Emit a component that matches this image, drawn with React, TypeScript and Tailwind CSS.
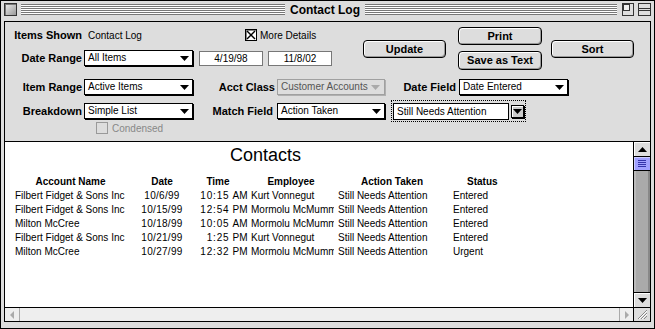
import React from 'react';

const rows = [
  ['Filbert Fidget & Sons Inc', '10/6/99', '10:15', 'AM', 'Kurt Vonnegut', 'Still Needs Attention', 'Entered'],
  ['Filbert Fidget & Sons Inc', '10/15/99', '12:54', 'PM', 'Mormolu McMummy', 'Still Needs Attention', 'Entered'],
  ['Milton McCree', '10/18/99', '10:05', 'AM', 'Mormolu McMummy', 'Still Needs Attention', 'Entered'],
  ['Filbert Fidget & Sons Inc', '10/21/99', '1:25', 'PM', 'Kurt Vonnegut', 'Still Needs Attention', 'Entered'],
  ['Milton McCree', '10/27/99', '12:32', 'PM', 'Mormolu McMummy', 'Still Needs Attention', 'Urgent'],
];

function Arrow({ color = '#000' }: { color?: string }) {
  return (
    <svg width="9" height="5" viewBox="0 0 9 5" className="shrink-0">
      <polygon points="0,0 9,0 4.5,5" fill={color} />
    </svg>
  );
}

function Popup({ text, width, disabled }: { text: string; width: string; disabled?: boolean }) {
  return (
    <div
      className={
        disabled
          ? `${width} h-[16px] flex items-center pl-[3px] pr-[4px] border border-[#a0a0a0] bg-[#dddddd] text-[#555] shadow-[1px_1px_0_#b0b0b0]`
          : `${width} h-[16px] flex items-center pl-[3px] pr-[3px] border border-black bg-white shadow-[1px_1px_0_#000]`
      }
    >
      <span className="text-[10px] leading-[14px] whitespace-nowrap">{text}</span>
      <span className="ml-auto">
        <Arrow color={disabled ? '#aaa' : '#000'} />
      </span>
    </div>
  );
}

function Button({ label, cls }: { label: string; cls: string }) {
  return (
    <div
      className={`${cls} flex items-center justify-center rounded-[4px] border border-black bg-[#dddddd] shadow-[inset_1px_1px_0_#fff,inset_-1px_-1px_0_#999] text-[11px] font-bold whitespace-nowrap`}
    >
      {label}
    </div>
  );
}

const stripes =
  'h-[11px] bg-[image:repeating-linear-gradient(to_bottom,#777_0px,#777_1px,#fff_1px,#fff_2px)]';

export default function App() {
  return (
    <div className="w-[655px] h-[329px] border border-black bg-[#dddddd] font-['Liberation_Sans',Arial,sans-serif] text-black overflow-hidden">
      {/* title bar */}
      <div className="flex h-[20px] items-start pt-[2px] pl-[3px] pr-[3px]">
        <div className="w-[13px] h-[13px] border border-[#333] bg-[linear-gradient(135deg,#eee,#999)] shadow-[inset_1px_1px_0_#777]" />
        <div className={`ml-[4px] mt-[1px] w-[264px] ${stripes}`} />
        <div className="px-[5px] text-[12px] font-bold leading-[14px] whitespace-nowrap">Contact Log</div>
        <div className={`flex-1 mt-[1px] ${stripes}`} />
        <svg width="12" height="13" viewBox="0 0 12 13" className="ml-[5px]">
          <rect x="0.5" y="0.5" width="11" height="12" fill="#ddd" stroke="#333" />
          <rect x="1.5" y="1.5" width="6" height="6" fill="#eee" stroke="#333" />
        </svg>
        <svg width="13" height="13" viewBox="0 0 13 13" className="ml-[4px]">
          <rect x="0.5" y="0.5" width="12" height="12" fill="#ddd" stroke="#333" />
          <line x1="1" y1="5.5" x2="12" y2="5.5" stroke="#333" />
          <line x1="1" y1="7.5" x2="12" y2="7.5" stroke="#333" />
        </svg>
      </div>

      {/* body */}
      <div className="ml-[3px] mr-[3px] h-[301px] border border-black flex flex-col">
        {/* controls */}
        <div className="h-[120px] border-b border-black shrink-0 whitespace-nowrap">
          <div className="flex h-[48px]">
            <div className="w-[335px] shrink-0">
              <div className="flex items-center mt-[6px] h-[14px]">
                <div className="w-[77px] shrink-0 text-right text-[11px] font-bold">Items Shown</div>
                <div className="ml-[6px] w-[60px] shrink-0 text-[10px]">Contact Log</div>
                <div className="ml-[97px] shrink-0 w-[12px] h-[12px] border border-black bg-white shadow-[inset_1px_1px_0_#888]">
                  <svg width="10" height="10" viewBox="0 0 10 10">
                    <line x1="1" y1="1" x2="9" y2="9" stroke="#000" strokeWidth="1.5" />
                    <line x1="9" y1="1" x2="1" y2="9" stroke="#000" strokeWidth="1.5" />
                  </svg>
                </div>
                <div className="ml-[3px] text-[10px]">More Details</div>
              </div>
              <div className="flex items-center mt-[8px] h-[16px]">
                <div className="w-[77px] shrink-0 text-right text-[11px] font-bold">Date Range</div>
                <div className="ml-[2px]">
                  <Popup text="All Items" width="w-[109px]" />
                </div>
                <div className="ml-[6px] w-[64px] h-[15px] border border-[#777] bg-white text-[10px] leading-[13px] text-center">4/19/98</div>
                <div className="ml-[5px] w-[64px] h-[15px] border border-[#777] bg-white text-[10px] leading-[13px] text-center">11/8/02</div>
              </div>
            </div>
            <Button label="Update" cls="ml-[23px] mt-[18px] w-[83px] h-[18px]" />
            <div className="ml-[12px] flex flex-col">
              <Button label="Print" cls="mt-[5px] w-[84px] h-[18px]" />
              <Button label="Save as Text" cls="mt-[6px] w-[84px] h-[19px]" />
            </div>
            <Button label="Sort" cls="ml-[9px] mt-[18px] w-[83px] h-[18px]" />
          </div>

          <div className="flex items-center mt-[9px] h-[16px]">
            <div className="w-[77px] text-right text-[11px] font-bold">Item Range</div>
            <div className="ml-[2px]">
              <Popup text="Active Items" width="w-[109px]" />
            </div>
            <div className="w-[82px] text-right text-[11px] font-bold">Acct Class</div>
            <div className="ml-[2px]">
              <Popup text="Customer Accounts" width="w-[108px]" disabled />
            </div>
            <div className="w-[71px] text-right text-[11px] font-bold">Date Field</div>
            <div className="ml-[3px]">
              <Popup text="Date Entered" width="w-[109px]" />
            </div>
          </div>

          <div className="flex items-center mt-[8px] h-[16px]">
            <div className="w-[77px] text-right text-[11px] font-bold">Breakdown</div>
            <div className="ml-[2px]">
              <Popup text="Simple List" width="w-[109px]" />
            </div>
            <div className="w-[82px] text-right text-[11px] font-bold pr-[2px]">Match Field</div>
            <div className="ml-[2px]">
              <Popup text="Action Taken" width="w-[108px]" />
            </div>
            <div className="ml-[6px] w-[135px] h-[22px] border border-dotted border-black flex items-center pl-[1px]">
              <div className="w-[116px] h-[17px] border border-black bg-white text-[10px] leading-[15px] pl-[3px]">Still Needs Attention</div>
              <div className="ml-[2px] w-[13px] h-[13px] border border-black bg-[#ccc] shadow-[1px_1px_0_#000,inset_1px_1px_0_#fff] flex items-center justify-center">
                <Arrow />
              </div>
            </div>
          </div>

          <div className="flex items-center mt-[3px] h-[12px] ml-[91px]">
            <div className="w-[12px] h-[12px] border border-[#999]" />
            <div className="ml-[4px] text-[10px] text-[#888]">Condensed</div>
          </div>
        </div>

        {/* list */}
        <div className="flex flex-1 min-h-0">
          <div className="flex-1 bg-white">
            <div className="mt-[3px] pl-[225px] text-[18px] leading-[20px]">Contacts</div>
            <div className="mt-[10px] grid grid-cols-[131px_52px_60px_86px_112px_70px] text-[10px] leading-[14px] whitespace-nowrap">
              <div className="text-center font-bold">Account Name</div>
              <div className="text-center font-bold">Date</div>
              <div className="text-center font-bold">Time</div>
              <div className="text-center font-bold">Employee</div>
              <div className="text-center font-bold pl-[4px]">Action Taken</div>
              <div className="font-bold pl-[21px]">Status</div>
              {rows.map((r, i) => (
                <React.Fragment key={i}>
                  <div className="pl-[10px]">{r[0]}</div>
                  <div className="text-center tracking-[0.3px]">{r[1]}</div>
                  <div className="flex justify-end">
                    <span className="tracking-[0.8px]">{r[2]}</span>
                    <span className="ml-[3px] tracking-[0.3px]">{r[3]}</span>
                  </div>
                  <div className="pl-[3px] overflow-hidden">{r[4]}</div>
                  <div className="pl-[4px]">{r[5]}</div>
                  <div className="pl-[7px]">{r[6]}</div>
                </React.Fragment>
              ))}
            </div>
          </div>
          {/* vertical scrollbar */}
          <div className="w-[17px] border-l border-black flex flex-col bg-[#aaa] shadow-[inset_-2px_0_0_#888,inset_2px_0_0_#bbb]">
            <div className="h-[15px] border-b border-black bg-[#ddd] flex items-center justify-center shadow-[inset_1px_1px_0_#fff]">
              <svg width="9" height="5" viewBox="0 0 9 5">
                <polygon points="0,5 9,5 4.5,0" fill="#000" />
              </svg>
            </div>
            <div className="h-[14px] border-b border-black bg-[#a0a0ff] shadow-[inset_1px_1px_0_#ccf] flex flex-col items-center justify-center gap-[1px]">
              <div className="w-[8px] h-[1px] bg-[#3333aa]" />
              <div className="w-[8px] h-[1px] bg-[#3333aa]" />
              <div className="w-[8px] h-[1px] bg-[#3333aa]" />
              <div className="w-[8px] h-[1px] bg-[#3333aa]" />
            </div>
            <div className="flex-1" />
            <div className="h-[15px] border-t border-black bg-[#ddd] flex items-center justify-center shadow-[inset_1px_1px_0_#fff]">
              <Arrow />
            </div>
          </div>
        </div>

        {/* horizontal scrollbar */}
        <div className="h-[14px] border-t border-black flex shrink-0 bg-[#eee]">
          <div className="w-[15px] border-r border-[#aaa] flex items-center justify-center">
            <svg width="4" height="8" viewBox="0 0 4 8">
              <polygon points="4,0 4,8 0,4" fill="#aaa" />
            </svg>
          </div>
          <div className="flex-1" />
          <div className="w-[14px] border-l border-[#aaa] flex items-center justify-center">
            <svg width="4" height="8" viewBox="0 0 4 8">
              <polygon points="0,0 0,8 4,4" fill="#aaa" />
            </svg>
          </div>
          <div className="w-[17px] border-l border-black bg-[#ddd] flex items-center justify-center">
            <svg width="12" height="11" viewBox="0 0 12 11">
              <line x1="2" y1="10" x2="11" y2="1" stroke="#888" />
              <line x1="5" y1="10" x2="11" y2="4" stroke="#888" />
              <line x1="8" y1="10" x2="11" y2="7" stroke="#888" />
              <line x1="3" y1="10" x2="11" y2="2" stroke="#fff" />
              <line x1="6" y1="10" x2="11" y2="5" stroke="#fff" />
            </svg>
          </div>
        </div>
      </div>
    </div>
  );
}
